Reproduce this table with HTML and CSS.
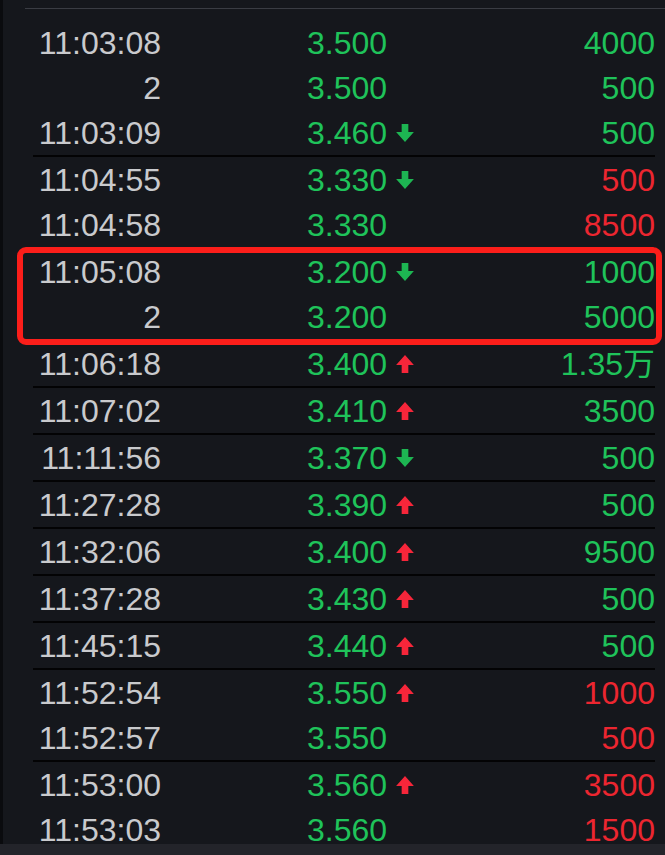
FILE: index.html
```html
<!DOCTYPE html>
<html lang="zh-CN">
<head>
    <meta charset="UTF-8">
    <meta name="viewport" content="width=device-width, initial-scale=1.0">
    <title>分时成交</title>
    <link rel="stylesheet" href="styles.css">
</head>
<body>
    <div class="panel">
        <div class="top-line"></div>
        <div class="ticks">
            <div class="group">
                <div class="row"><span class="time">11:03:08</span><span class="price">3.500</span><span class="vol up">4000</span></div>
                <div class="row"><span class="time">2</span><span class="price">3.500</span><span class="vol up">500</span></div>
                <div class="row"><span class="time">11:03:09</span><span class="price">3.460<svg class="arrow down" viewBox="0 0 18 18"><path d="M6 1h6v7h5l-8 9-8-9h5z"/></svg></span><span class="vol up">500</span></div>
            </div>
            <div class="group">
                <div class="row"><span class="time">11:04:55</span><span class="price">3.330<svg class="arrow down" viewBox="0 0 18 18"><path d="M6 1h6v7h5l-8 9-8-9h5z"/></svg></span><span class="vol dn">500</span></div>
                <div class="row"><span class="time">11:04:58</span><span class="price">3.330</span><span class="vol dn">8500</span></div>
            </div>
            <div class="group marked">
                <div class="row"><span class="time">11:05:08</span><span class="price">3.200<svg class="arrow down" viewBox="0 0 18 18"><path d="M6 1h6v7h5l-8 9-8-9h5z"/></svg></span><span class="vol up">1000</span></div>
                <div class="row"><span class="time">2</span><span class="price">3.200</span><span class="vol up">5000</span></div>
            </div>
            <div class="group">
                <div class="row"><span class="time">11:06:18</span><span class="price">3.400<svg class="arrow rise" viewBox="0 0 18 18"><path d="M6 17h6v-7h5l-8-9-8 9h5z"/></svg></span><span class="vol up">1.35万</span></div>
            </div>
            <div class="group">
                <div class="row"><span class="time">11:07:02</span><span class="price">3.410<svg class="arrow rise" viewBox="0 0 18 18"><path d="M6 17h6v-7h5l-8-9-8 9h5z"/></svg></span><span class="vol up">3500</span></div>
            </div>
            <div class="group">
                <div class="row"><span class="time">11:11:56</span><span class="price">3.370<svg class="arrow down" viewBox="0 0 18 18"><path d="M6 1h6v7h5l-8 9-8-9h5z"/></svg></span><span class="vol up">500</span></div>
            </div>
            <div class="group">
                <div class="row"><span class="time">11:27:28</span><span class="price">3.390<svg class="arrow rise" viewBox="0 0 18 18"><path d="M6 17h6v-7h5l-8-9-8 9h5z"/></svg></span><span class="vol up">500</span></div>
            </div>
            <div class="group">
                <div class="row"><span class="time">11:32:06</span><span class="price">3.400<svg class="arrow rise" viewBox="0 0 18 18"><path d="M6 17h6v-7h5l-8-9-8 9h5z"/></svg></span><span class="vol up">9500</span></div>
            </div>
            <div class="group">
                <div class="row"><span class="time">11:37:28</span><span class="price">3.430<svg class="arrow rise" viewBox="0 0 18 18"><path d="M6 17h6v-7h5l-8-9-8 9h5z"/></svg></span><span class="vol up">500</span></div>
            </div>
            <div class="group">
                <div class="row"><span class="time">11:45:15</span><span class="price">3.440<svg class="arrow rise" viewBox="0 0 18 18"><path d="M6 17h6v-7h5l-8-9-8 9h5z"/></svg></span><span class="vol up">500</span></div>
            </div>
            <div class="group">
                <div class="row"><span class="time">11:52:54</span><span class="price">3.550<svg class="arrow rise" viewBox="0 0 18 18"><path d="M6 17h6v-7h5l-8-9-8 9h5z"/></svg></span><span class="vol dn">1000</span></div>
                <div class="row"><span class="time">11:52:57</span><span class="price">3.550</span><span class="vol dn">500</span></div>
            </div>
            <div class="group">
                <div class="row"><span class="time">11:53:00</span><span class="price">3.560<svg class="arrow rise" viewBox="0 0 18 18"><path d="M6 17h6v-7h5l-8-9-8 9h5z"/></svg></span><span class="vol dn">3500</span></div>
                <div class="row"><span class="time">11:53:03</span><span class="price">3.560</span><span class="vol dn">1500</span></div>
            </div>
        </div>
    </div>
    <div class="scrollbar"></div>
</body>
</html>
```

FILE: styles.css
```css
body {
    margin: 0;
    background-color: #15171c;
    font-family: "Liberation Sans", "Noto Sans CJK SC", sans-serif;
    overflow: hidden;
}
.panel {
    border-left: 3px solid #0a0b0e;
    min-height: 855px;
    box-sizing: border-box;
    padding-top: 8px;
}
.top-line {
    height: 1px;
    margin-left: 22px;
    background-color: #3a3c43;
}
.ticks {
    padding-top: 11px;
}
.group {
    margin: 0 10px 0 30px;
    border-bottom: 2px solid #030304;
}
.group:last-child {
    border-bottom: none;
}
.group.marked {
    position: relative;
}
.group.marked::after {
    content: "";
    position: absolute;
    top: -2px;
    bottom: -6px;
    left: -16px;
    right: -7px;
    border: 6px solid #fb1e1a;
    border-radius: 9px;
}
.row {
    display: grid;
    grid-template-columns: 128px 146px auto 1fr;
    align-items: center;
    height: 45px;
    font-size: 32px;
    line-height: 1;
}
.time {
    grid-column: 1;
    text-align: right;
    color: #c9cacd;
}
.price {
    grid-column: 3;
    display: flex;
    align-items: center;
    gap: 8px;
    color: #1fc35a;
}
.vol {
    grid-column: 4;
    text-align: right;
}
.vol.up {
    color: #1fc35a;
}
.vol.dn {
    color: #ec2630;
}
.arrow {
    flex: none;
    width: 20px;
    height: 20px;
}
.arrow.down {
    fill: #1db552;
}
.arrow.rise {
    fill: #f6263a;
}
.scrollbar {
    position: fixed;
    left: 0;
    right: 0;
    bottom: 0;
    height: 11px;
    background-color: #23242a;
}
```
